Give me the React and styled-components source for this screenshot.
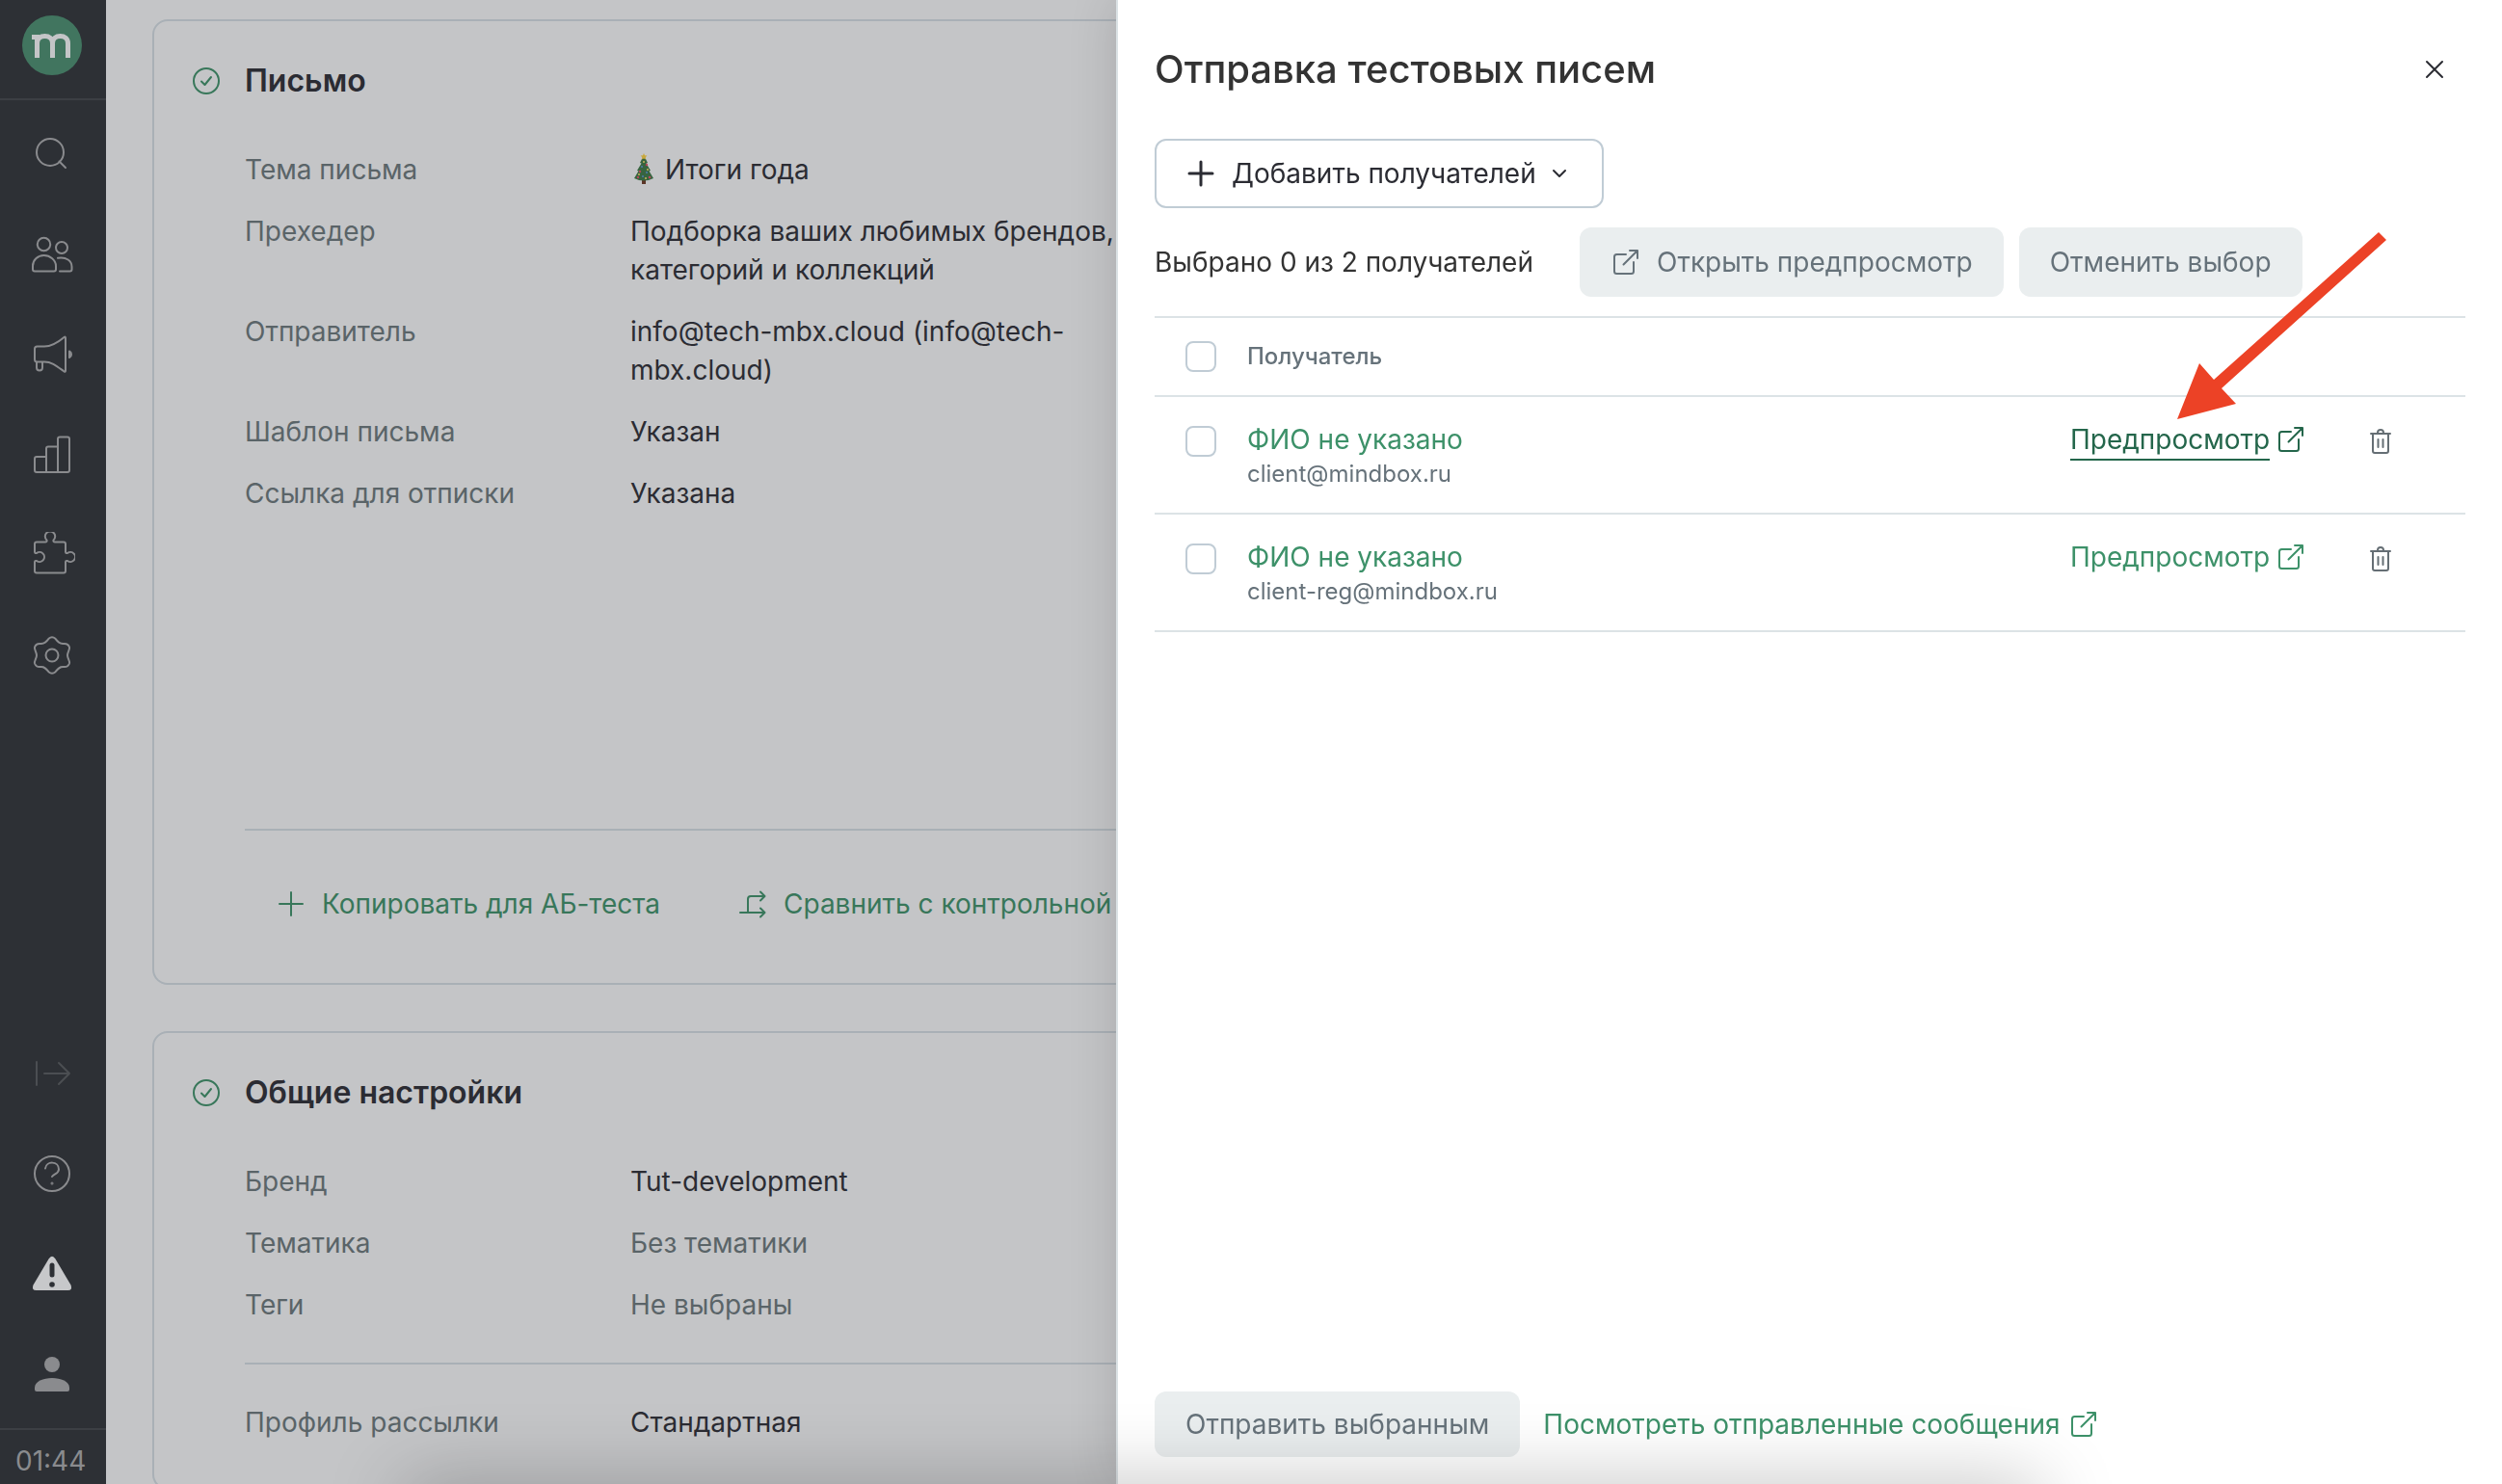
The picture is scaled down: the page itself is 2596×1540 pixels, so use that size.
import { createGlobalStyle, styled } from "styled-components";

const GlobalStyle = createGlobalStyle`
    *, *::before, *::after {
        box-sizing: border-box;
    }
    body {
        margin: 0;
        font-family: Inter, "Noto Sans", sans-serif;
        font-size: 28px;
        line-height: 40px;
        color: #2b2c33;
        background: #c4c5c7;
        overflow: hidden;
    }
    button {
        font: inherit;
        cursor: pointer;
    }
    a {
        text-decoration: none;
    }
`

const Page = styled.div`
    display: flex;
    height: 100vh;
    overflow: hidden;
`

/* ---------- icons ---------- */

const Svg = styled.svg`
    flex: none;
    display: block;
    width: ${props => props.$size || 48}px;
    height: ${props => props.$size || 48}px;
    fill: none;
    stroke: currentColor;
    stroke-width: 2;
    stroke-linecap: round;
    stroke-linejoin: round;
`

const SearchIcon = () => (
    <Svg viewBox="0 0 48 48">
        <circle cx="22" cy="22" r="14" />
        <path d="M31.500 31.500l6.500 6.500" />
    </Svg>
)

const UsersIcon = () => (
    <Svg viewBox="0 0 48 48">
        <circle cx="15.500" cy="13.500" r="6.700" />
        <path d="M4 39.500V36c0-6 5-11 11.500-11S28 30 28 36v3.500q0 2-2 2H6q-2 0-2-2z" />
        <circle cx="34" cy="17" r="6" />
        <path d="M30 27.800c9-1.500 14.500 3 14.500 9v2.700q0 2-2 2H32" />
    </Svg>
)

const MegaphoneIcon = () => (
    <Svg viewBox="0 0 48 48">
        <path d="M6 18q0-2.500 2.500-2.500h7.500c8 0 14-4 20.500-9.500q1.500-1 1.500.5v34q0 2-1.500 1C29 36 24 31.500 16 31.500H8.500Q6 31.500 6 29z" />
        <path d="M8 32v5.500q0 3 3 3t3-3V32" />
        <path d="M42 20.500a3.600 3.600 0 0 1 0 6.500z" fill="currentColor" />
    </Svg>
)

const ChartIcon = () => (
    <Svg viewBox="0 0 48 48">
        <path d="M18 42V17.500q0-2 2-2h10V42M30 15.500V7.500q0-2 2-2h8q2 0 2 2V40q0 2-2 2H8q-2 0-2-2V28q0-2 2-2h10" />
    </Svg>
)

const PuzzleIcon = () => (
    <Svg viewBox="0 0 48 48">
        <path d="M8 10.500h9q2 0 1.500-2a5.200 5.200 0 1 1 7 0q-.5 2 1.500 2h9q2 0 2 2v8q0 2 2 1.500a5 5 0 1 1 0 8q-2-.5-2 1.500v9q0 2-2 2H8q-2 0-2-2v-9q0-2 2-1.500a5 5 0 1 0 0-8q-2 .5-2-1.500v-8q0-2 2-2z" />
    </Svg>
)

const GearIcon = () => (
    <Svg viewBox="0 0 48 48">
        <circle cx="24" cy="24" r="6.500" />
        <path d="M20.500 6.800q3.500-3 7 0c2.500 3.200 4.500 5.700 8.500 5.200q4.500-.5 6 3.500c.8 2.500-2 5-2 8.500s2.800 6 2 8.500q-1.500 4-6 3.500c-4-.5-6 2-8.500 5.200q-3.500 3-7 0c-2.500-3.200-4.500-5.700-8.500-5.200q-4.500.5-6-3.500c-.8-2.500 2-5 2-8.500s-2.800-6-2-8.500q1.500-4 6-3.500c4 .5 6-2 8.500-5.200z" />
    </Svg>
)

const ExpandIcon = () => (
    <Svg viewBox="0 0 48 48">
        <path d="M8 12v24M16 24h26M31 13l11 11-11 11" />
    </Svg>
)

const HelpIcon = () => (
    <Svg viewBox="0 0 48 48">
        <circle cx="24" cy="24" r="18" />
        <path d="M17 18.500c1-8 14-8 14 1 0 4.500-5 4.500-7 7.500" />
        <circle cx="24" cy="34" r=".5" />
    </Svg>
)

const WarningIcon = () => (
    <Svg viewBox="0 0 48 48">
        <path d="M20.500 8.500q3.500-5.500 7 0L43.500 35.500q2 5.500-3 5.500h-33q-5 0-3-5.500z" fill="#c7c8ca" stroke="none" />
        <path d="M24 15v10" stroke="#2d3035" strokeWidth="5" />
        <circle cx="24" cy="35" r="2.800" fill="#2d3035" stroke="none" />
    </Svg>
)

const PersonIcon = () => (
    <Svg viewBox="0 0 48 48">
        <g fill="currentColor" stroke="none">
            <circle cx="24" cy="14" r="8" />
            <path d="M6 38c0-6.500 9-10 18-10s18 3.500 18 10v2q0 2-2 2H8q-2 0-2-2z" />
        </g>
    </Svg>
)

const CheckIcon = () => (
    <Svg $size={32} viewBox="0 0 32 32">
        <circle cx="16" cy="16" r="13" />
        <path d="M11 16.500l3.500 3.500 6.500-8" />
    </Svg>
)

const PlusIcon = ({ weight = 2 }) => (
    <Svg $size={32} viewBox="0 0 32 32">
        <path d="M16 4v24M4 16h24" strokeWidth={weight} />
    </Svg>
)

const CompareIcon = () => (
    <Svg $size={32} viewBox="0 0 32 32">
        <path d="M3 25h25M24 20.500l4.500 4.500-4.500 4.500M11 25V11q0-3 3-3h14M24 3.500L28.500 8 24 12.500" />
    </Svg>
)

const ExternalIcon = () => (
    <Svg $size={32} viewBox="0 0 32 32">
        <path d="M16 8H6.500Q4 8 4 10.500v15Q4 28 6.500 28h15q2.500 0 2.500-2.500V16M13.500 18.500L28 4M20 4h8v8" />
    </Svg>
)

const TrashIcon = () => (
    <Svg $size={32} viewBox="0 0 32 32">
        <path d="M6 8h20M8 8v18q0 2 2 2h12q2 0 2-2V8M13 8V7q0-3 3-3t3 3v1M13.500 14v8M18.500 14v8" />
    </Svg>
)

const CloseIcon = () => (
    <Svg $size={32} viewBox="0 0 32 32">
        <path d="M8 8l16 16M24 8L8 24" />
    </Svg>
)

const ChevronIcon = () => (
    <Svg $size={16} viewBox="0 0 16 16">
        <path d="M2 5l6 6 6-6" />
    </Svg>
)

const Tree = styled(Svg)`
    width: 28px;
    height: 36px;
    stroke: none;
`

const TreeIcon = () => (
    <Tree viewBox="0 0 28 36">
        <path d="M12 28h4v5h-4z" fill="#5b3526" />
        <path d="M14 3l4 8-1.500.5 4.500 7.500-1.500 .5 4.500 7.500q-10 5-20 0l4.500-7.500-1.500-.5 4.500-7.500L10 11z" fill="#37643f" />
        <path d="M14 1l1 2.200 2.400.3-1.700 1.700.5 2.400-2.200-1.200-2.200 1.200.5-2.400-1.700-1.700 2.400-.3z" fill="#c9a83c" />
        <g fill="#b5475c">
            <circle cx="17" cy="13" r="1.200" />
            <circle cx="10" cy="20" r="1.200" />
            <circle cx="20" cy="26" r="1.300" />
            <circle cx="8" cy="26" r="1.200" />
        </g>
        <g fill="#4d78a8">
            <circle cx="12" cy="15" r="1.100" />
            <circle cx="17" cy="21" r="1.100" />
            <circle cx="13" cy="25" r="1.100" />
        </g>
        <g fill="#c9b45a">
            <circle cx="14" cy="10" r="1" />
            <circle cx="18" cy="18" r="1" />
            <circle cx="9" cy="23" r="1" />
            <circle cx="16" cy="27" r="1" />
        </g>
    </Tree>
)

/* ---------- sidebar ---------- */

const Sidebar = styled.nav`
    flex: none;
    width: 110px;
    display: flex;
    flex-direction: column;
    background: #2d3035;
    color: #8a8b8e;
`

const LogoWrapper = styled.a`
    height: 104px;
    padding: 16px 23px;
    border-bottom: 2px solid #3c3f44;
`

const NavGroup = styled.div`
    display: flex;
    flex-direction: column;
    padding: 4px 0;
    margin-top: ${props => props.$bottom ? 'auto' : '0'};
`

const NavButton = styled.button`
    height: 104px;
    padding: 0 0 0 30px;
    border: 0;
    background: none;
    color: ${props => props.$muted ? '#4b4e52' : 'inherit'};
`

const Clock = styled.time`
    height: 58px;
    padding: 12px 0 0 16px;
    border-top: 2px solid #3c3f44;
`

const Logo = () => (
    <LogoWrapper href="#" aria-label="Mindbox">
        <Svg $size={62} viewBox="0 0 62 62">
            <circle cx="31" cy="31" r="31" fill="#41755f" stroke="none" />
            <path
                d="M10 22.500h5.500V44M15.500 29c0-5 3.500-7.500 8-7.500s8 2.500 8 7.500v15M31.500 29c0-5 3.500-7.500 8-7.500s8 2.500 8 7.500v15"
                stroke="#c4c5c7"
                strokeWidth="5"
                strokeLinecap="butt"
                strokeLinejoin="miter"
            />
        </Svg>
    </LogoWrapper>
)

const navTop = [
    ['Поиск', SearchIcon],
    ['Клиенты', UsersIcon],
    ['Кампании', MegaphoneIcon],
    ['Отчеты', ChartIcon],
    ['Интеграции', PuzzleIcon],
    ['Настройки', GearIcon],
]

const navBottom = [
    ['Развернуть', ExpandIcon, true],
    ['Помощь', HelpIcon],
    ['Предупреждения', WarningIcon],
    ['Профиль', PersonIcon],
]

const NavItems = ({ items }) => items.map(([label, Icon, muted]) => (
    <NavButton key={label} aria-label={label} $muted={muted}>
        <Icon />
    </NavButton>
))

/* ---------- cards under the drawer ---------- */

const Main = styled.main`
    flex: 1;
    min-width: 0;
    display: flex;
    flex-direction: column;
    gap: 48px;
    padding: 20px 48px;
`

const Card = styled.section`
    flex: none;
    padding: 42px 0 48px 38px;
    border: 2px solid #a9b0b6;
    border-radius: 16px;
`

const CardHead = styled.div`
    display: flex;
    align-items: center;
    gap: 24px;
    margin-bottom: 52px;
    color: #38775a;
`

const CardTitle = styled.h2`
    margin: 0;
    font-size: 32px;
    font-weight: 600;
    line-height: 40px;
    color: #2b2c33;
`

const Fields = styled.dl`
    display: grid;
    grid-template-columns: 376px 546px;
    gap: 24px;
    align-content: start;
    margin: 0 0 0 56px;
    min-height: ${props => props.$tall ? '704px' : '0'};
`

const Label = styled.dt`
    color: #5a6468;
`

const Value = styled.dd`
    display: flex;
    align-items: center;
    gap: 8px;
    margin: 0;
    color: ${props => props.$empty ? '#5a6468' : 'inherit'};
`

const Divider = styled.hr`
    margin: ${props => props.$spaced ? '40px' : '0'} 0 ${props => props.$spaced ? '40px' : '0'} 56px;
    border: 0;
    border-top: 2px solid #a9b0b6;
`

const CardActions = styled.div`
    display: flex;
    gap: 80px;
    margin-left: 56px;
    padding: 56px 32px 14px;
`

const CardAction = styled.button`
    display: flex;
    align-items: center;
    gap: 16px;
    padding: 0;
    border: 0;
    background: none;
    color: #38775a;
    white-space: nowrap;
`

/* ---------- drawer ---------- */

const Drawer = styled.aside`
    position: fixed;
    top: 0;
    right: 0;
    bottom: 0;
    left: 1158px;
    display: flex;
    flex-direction: column;
    padding: 48px 38px 28px;
    border-left: 2px solid #dbe2e5;
    background: #fff;
    box-shadow: 0 0 48px rgba(0, 0, 0, 0.14);
    color: #333;
`

const DrawerHead = styled.header`
    display: flex;
    justify-content: space-between;
    align-items: center;
    padding-right: 16px;
`

const DrawerTitle = styled.h1`
    margin: 0;
    font-size: 40px;
    font-weight: 500;
    line-height: 48px;
`

const IconButton = styled.button`
    padding: 0;
    border: 0;
    background: none;
    color: ${props => props.$dark ? '#2b2c33' : '#656e74'};
`

const Button = styled.button`
    display: flex;
    align-items: center;
    gap: 16px;
    height: ${props => props.$short ? '68px' : '72px'};
    padding: 0 32px;
    border: 0;
    border-radius: 12px;
    background: #eaeeef;
    color: #66727a;
    white-space: nowrap;
`

const AddButton = styled(Button)`
    align-self: flex-start;
    margin: 48px 0 20px;
    padding: 0 36px 0 30px;
    border: 2px solid #c0ccd5;
    background: #fff;
    color: #2b2c33;
`

const Toolbar = styled.div`
    display: flex;
    align-items: center;
    gap: 16px;
    margin-bottom: 20px;
`

const Counter = styled.span`
    margin-right: 32px;
`

const Table = styled.table`
    width: 100%;
    border-collapse: collapse;
    text-align: left;
`

const Row = styled.tr`
    border-top: 2px solid #dce3e6;
    border-bottom: 2px solid #dce3e6;
`

const HeadCell = styled.th`
    height: 82px;
    padding: 0;
    font-size: 24px;
    font-weight: 500;
    line-height: 32px;
    color: #66727a;
`

const Cell = styled.td`
    height: 122px;
    padding: ${props => props.$icon ? '30px' : '24px'} 0 0;
    vertical-align: top;
    width: ${props => props.$width || 'auto'};
`

const CheckCell = styled(Cell)`
    width: 96px;
    height: auto;
    padding: ${props => props.$head ? '24px' : '30px'} 0 0 32px;
`

const Checkbox = styled.input`
    appearance: none;
    display: block;
    width: 32px;
    height: 32px;
    margin: 0;
    border: 2px solid #c0ccd5;
    border-radius: 8px;
    background: #fff;
`

const Link = styled.a`
    display: inline-flex;
    align-items: flex-start;
    gap: ${props => props.$tight ? '6px' : '8px'};
    color: ${props => props.$active ? '#24664b' : '#3d9169'};

    svg {
        margin-top: 4px;
    }
`

const LinkText = styled.span`
    border-bottom: 2px solid ${props => props.$active ? '#24664b' : 'transparent'};
`

const Email = styled.div`
    font-size: 24px;
    line-height: 32px;
    color: #66727a;
`

const DrawerFooter = styled.footer`
    display: flex;
    align-items: center;
    gap: 24px;
    margin-top: auto;
`

const BottomShade = styled.div`
    position: fixed;
    bottom: -40px;
    left: 440px;
    right: 500px;
    height: 20px;
    box-shadow: 0 0 80px 20px rgba(0, 0, 0, 0.26);
    pointer-events: none;
`

const Pointer = styled.svg`
    position: fixed;
    top: 240px;
    right: 120px;
    width: 218px;
    height: 196px;
    fill: #ec4226;
    pointer-events: none;
`

const recipients = ['client@mindbox.ru', 'client-reg@mindbox.ru']

const App = () => {
    return (
        <Page>
            <GlobalStyle />
            <Sidebar>
                <Logo />
                <NavGroup>
                    <NavItems items={navTop} />
                </NavGroup>
                <NavGroup $bottom>
                    <NavItems items={navBottom} />
                </NavGroup>
                <Clock>01:44</Clock>
            </Sidebar>
            <Main>
                <Card>
                    <CardHead>
                        <CheckIcon />
                        <CardTitle>Письмо</CardTitle>
                    </CardHead>
                    <Fields $tall>
                        <Label>Тема письма</Label>
                        <Value><TreeIcon />Итоги года</Value>
                        <Label>Прехедер</Label>
                        <Value>Подборка ваших любимых брендов, категорий и коллекций</Value>
                        <Label>Отправитель</Label>
                        <Value>info@tech-mbx.cloud (info@tech-mbx.cloud)</Value>
                        <Label>Шаблон письма</Label>
                        <Value>Указан</Value>
                        <Label>Ссылка для отписки</Label>
                        <Value>Указана</Value>
                    </Fields>
                    <Divider />
                    <CardActions>
                        <CardAction><PlusIcon />Копировать для АБ-теста</CardAction>
                        <CardAction><CompareIcon />Сравнить с контрольной</CardAction>
                    </CardActions>
                </Card>
                <Card>
                    <CardHead>
                        <CheckIcon />
                        <CardTitle>Общие настройки</CardTitle>
                    </CardHead>
                    <Fields>
                        <Label>Бренд</Label>
                        <Value>Tut-development</Value>
                        <Label>Тематика</Label>
                        <Value $empty>Без тематики</Value>
                        <Label>Теги</Label>
                        <Value $empty>Не выбраны</Value>
                    </Fields>
                    <Divider $spaced />
                    <Fields>
                        <Label>Профиль рассылки</Label>
                        <Value>Стандартная</Value>
                    </Fields>
                </Card>
            </Main>
            <Drawer>
                <DrawerHead>
                    <DrawerTitle>Отправка тестовых писем</DrawerTitle>
                    <IconButton $dark aria-label="Закрыть"><CloseIcon /></IconButton>
                </DrawerHead>
                <AddButton>
                    <PlusIcon weight={3} />
                    Добавить получателей
                    <ChevronIcon />
                </AddButton>
                <Toolbar>
                    <Counter>Выбрано 0 из 2 получателей</Counter>
                    <Button><ExternalIcon />Открыть предпросмотр</Button>
                    <Button>Отменить выбор</Button>
                </Toolbar>
                <Table>
                    <thead>
                        <Row>
                            <CheckCell $head><Checkbox type="checkbox" aria-label="Выбрать всех" /></CheckCell>
                            <HeadCell colSpan={3}>Получатель</HeadCell>
                        </Row>
                    </thead>
                    <tbody>
                        {recipients.map((email, i) => (
                            <Row key={email}>
                                <CheckCell><Checkbox type="checkbox" aria-label={email} /></CheckCell>
                                <Cell>
                                    <Link href="#">ФИО не указано</Link>
                                    <Email>{email}</Email>
                                </Cell>
                                <Cell $width="306px">
                                    <Link href="#" $tight $active={i === 0}>
                                        <LinkText $active={i === 0}>Предпросмотр</LinkText>
                                        <ExternalIcon />
                                    </Link>
                                </Cell>
                                <Cell $icon $width="104px">
                                    <IconButton aria-label="Удалить"><TrashIcon /></IconButton>
                                </Cell>
                            </Row>
                        ))}
                    </tbody>
                </Table>
                <DrawerFooter>
                    <Button $short>Отправить выбранным</Button>
                    <Link href="#">Посмотреть отправленные сообщения<ExternalIcon /></Link>
                </DrawerFooter>
            </Drawer>
            <BottomShade />
            <Pointer viewBox="0 0 218 196">
                <path d="M1 195L24 137l15 17L210 1l8 8L47 163l15 16z" />
            </Pointer>
        </Page>
    )
}

export default App
